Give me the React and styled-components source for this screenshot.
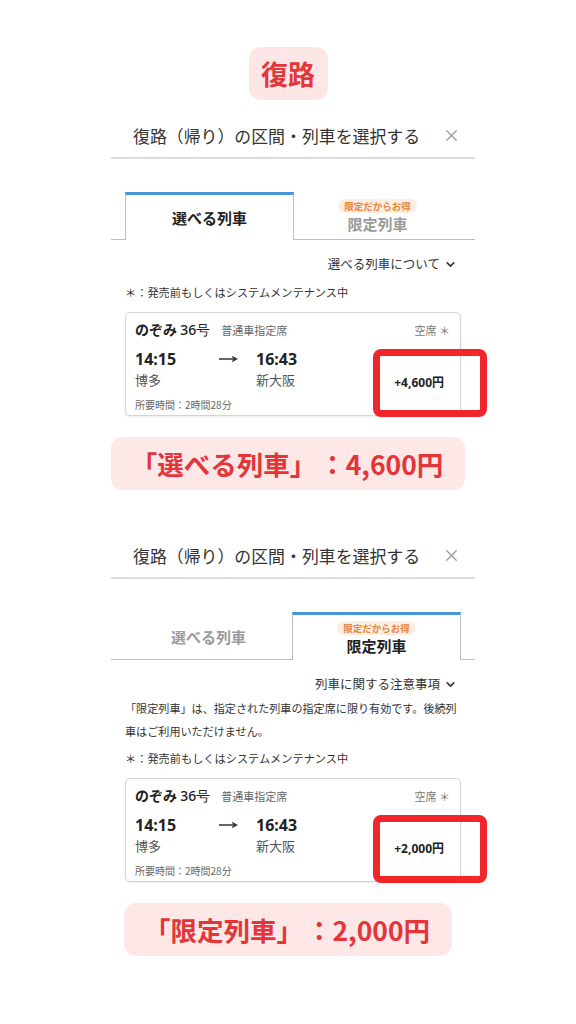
import styled, { createGlobalStyle } from "styled-components";
import { X, ChevronDown } from "lucide-react";

const GlobalStyle = createGlobalStyle`
  body {
    margin: 0;
    background: #fff;
    font-family: "Noto Sans CJK JP", "Noto Sans", sans-serif;
    color: #333;
  }
`;

const sections = [
  {
    active: 0,
    toggle: "選べる列車について",
    notice: null,
    price: "+4,600円",
    label: "「選べる列車」",
    amount: "：4,600円",
  },
  {
    active: 1,
    toggle: "列車に関する注意事項",
    notice:
      "「限定列車」は、指定された列車の指定席に限り有効です。後続列車はご利用いただけません。",
    price: "+2,000円",
    label: "「限定列車」",
    amount: "：2,000円",
  },
];

function App() {
  return (
    <Page>
      <GlobalStyle />
      <TitleBadge>復路</TitleBadge>
      {sections.map((s, i) => (
        <Section key={i} $first={i === 0}>
          <Panel>
            <HeaderRow>
              <HeaderText>復路（帰り）の区間・列車を選択する</HeaderText>
              <Close>
                <X size={19} strokeWidth={1.6} />
              </Close>
            </HeaderRow>
            <Divider />
            <TabBar>
              <Tab $active={s.active === 0}>
                <TabTitle $active={s.active === 0}>選べる列車</TabTitle>
              </Tab>
              <Tab $active={s.active === 1}>
                <Deal>限定だからお得</Deal>
                <TabTitle $active={s.active === 1}>限定列車</TabTitle>
              </Tab>
            </TabBar>
            <Toggle>
              {s.toggle}
              <ChevronDown size={13} strokeWidth={3} />
            </Toggle>
            <Body>
              {s.notice && <Notice>{s.notice}</Notice>}
              <Note $afterNotice={!!s.notice}>＊：発売前もしくはシステムメンテナンス中</Note>
              <CardWrap>
                <Card>
                  <CardHead>
                    <TrainName>
                      のぞみ <span>36号</span>
                    </TrainName>
                    <SeatType>普通車指定席</SeatType>
                    <Vacancy>空席 ＊</Vacancy>
                  </CardHead>
                  <CardBody>
                    <Schedule>
                      <Time>14:15</Time>
                      <Arrow width="20" height="8" viewBox="0 0 20 8">
                        <path d="M1 4h17M14 1.5L18.5 4L14 6.5" stroke="#333" strokeWidth="1.4" fill="none" />
                      </Arrow>
                      <Time>16:43</Time>
                      <Station>博多</Station>
                      <span />
                      <Station>新大阪</Station>
                    </Schedule>
                    <Price>{s.price}</Price>
                  </CardBody>
                  <Duration>所要時間：2時間28分</Duration>
                </Card>
                <Highlight />
              </CardWrap>
            </Body>
          </Panel>
          <Caption>
            {s.label}
            <Amount>{s.amount}</Amount>
          </Caption>
        </Section>
      ))}
    </Page>
  );
}

const Page = styled.div`
  width: 576px;
  padding: 47px 0 40px;
  display: flex;
  flex-direction: column;
  align-items: center;
`;

const TitleBadge = styled.div`
  width: 79px;
  height: 53px;
  border-radius: 12px;
  background: #fde6e6;
  color: #e2373b;
  font-size: 27px;
  font-weight: 700;
  display: flex;
  align-items: center;
  justify-content: center;
`;

const Section = styled.section`
  width: 100%;
  display: flex;
  flex-direction: column;
  align-items: center;
  margin-top: ${({ $first }) => ($first ? "15px" : "45px")};
`;

const Panel = styled.div`
  width: 364px;
  align-self: flex-start;
  margin-left: 111px;
`;

const HeaderRow = styled.div`
  height: 40px;
  display: flex;
  align-items: center;
  padding: 0 14px 0 22px;
`;

const HeaderText = styled.div`
  font-size: 16.9px;
  color: #333;
`;

const Close = styled.div`
  margin-left: auto;
  color: #9a9a9a;
  display: flex;
`;

const Divider = styled.div`
  height: 2px;
  background: #dcdcdc;
  margin-top: 2px;
`;

const TabBar = styled.div`
  margin-top: 33px;
  height: 47px;
  padding: 0 14px;
  display: flex;
  border-bottom: 1px solid #bdbdbd;
`;

const Tab = styled.div`
  flex: 1;
  display: flex;
  flex-direction: column;
  align-items: center;
  justify-content: center;
  box-sizing: border-box;
  ${({ $active }) =>
    $active
      ? `
    background: #fff;
    height: 48px;
    border: 1px solid #bdbdbd;
    border-top: 3px solid #4797d8;
    border-bottom: none;
    padding-top: 1px;
  `
      : `
    height: 47px;
    padding-top: 2px;
  `}
`;

const TabTitle = styled.div`
  font-size: 15px;
  font-weight: 700;
  line-height: 20px;
  color: ${({ $active }) => ($active ? "#222" : "#9a9a9a")};
`;

const Deal = styled.div`
  font-size: 9.5px;
  font-weight: 700;
  line-height: 14px;
  color: #e8853f;
  background: #fdeee2;
  border-radius: 8px;
  padding: 0 6px;
  margin-bottom: 1px;
`;

const Toggle = styled.div`
  display: flex;
  justify-content: flex-end;
  align-items: center;
  gap: 4px;
  padding-right: 18px;
  margin-top: 15px;
  font-size: 12.5px;
  line-height: 18px;
  color: #333;
`;

const Body = styled.div`
  padding: 0 14px;
`;

const Notice = styled.p`
  margin: 4px 0 0;
  font-size: 11.1px;
  line-height: 23px;
  color: #333;
`;

const Note = styled.p`
  margin: ${({ $afterNotice }) => ($afterNotice ? "6px" : "10px")} 0 0;
  font-size: 11.2px;
  line-height: 18px;
  color: #333;
`;

const CardWrap = styled.div`
  position: relative;
  margin-top: 11px;
`;

const Card = styled.div`
  border: 1px solid #d4d4d4;
  border-radius: 5px;
  box-shadow: 0 1px 2px rgba(0, 0, 0, 0.08);
  padding: 7px 16px 6px 9px;
  height: 104px;
  box-sizing: border-box;
`;

const CardHead = styled.div`
  display: flex;
  align-items: baseline;
  height: 18px;
  line-height: 18px;
`;

const TrainName = styled.div`
  font-size: 14px;
  font-weight: 700;
  color: #222;

  span {
    font-family: "Noto Sans", sans-serif;
    font-weight: 500;
  }
`;

const SeatType = styled.div`
  font-size: 11px;
  color: #666;
  margin-left: 11px;
`;

const Vacancy = styled.div`
  margin-left: auto;
  font-size: 11px;
  color: #777;
  margin-right: -6px;
`;

const CardBody = styled.div`
  display: flex;
  align-items: center;
  margin-top: 9px;
`;

const Schedule = styled.div`
  display: grid;
  grid-template-columns: 83px 38px auto;
  align-items: center;
`;

const Time = styled.div`
  font-family: "Noto Sans", sans-serif;
  font-size: 16px;
  font-weight: 700;
  line-height: 20px;
  color: #222;
`;

const Arrow = styled.svg`
  display: block;
`;

const Station = styled.div`
  font-size: 13px;
  line-height: 21px;
  color: #555;
`;

const Price = styled.div`
  margin-left: auto;
  margin-top: 26px;
  font-family: "Noto Sans", "Noto Sans CJK JP", sans-serif;
  font-size: 12px;
  font-weight: 700;
  color: #222;
`;

const Duration = styled.div`
  font-size: 10px;
  line-height: 14px;
  color: #666;
  margin-top: 7px;
`;

const Highlight = styled.div`
  position: absolute;
  left: 248px;
  top: 37px;
  width: 114px;
  height: 68px;
  box-sizing: border-box;
  border: 7px solid #f0262b;
  border-radius: 8px;
`;

const Caption = styled.div`
  margin-top: 21px;
  height: 53px;
  padding: 0 22px 0 20px;
  border-radius: 12px;
  background: #fde7e7;
  color: #e2363a;
  font-size: 26.5px;
  font-weight: 700;
  display: flex;
  align-items: center;
`;

const Amount = styled.span`
  margin-left: 3px;
`;

export default App;
